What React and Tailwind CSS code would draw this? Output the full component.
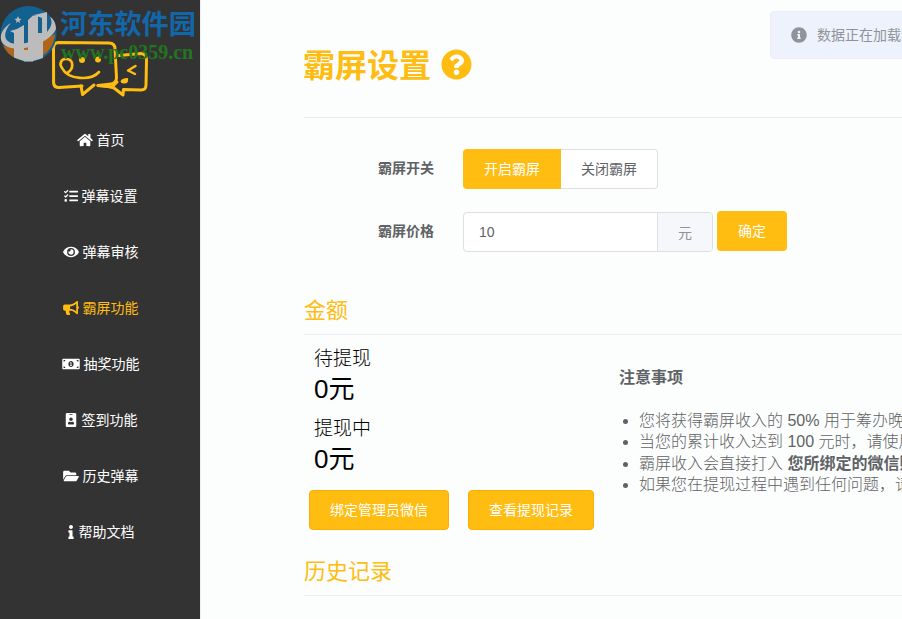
import {
  FaHome,
  FaTasks,
  FaEye,
  FaBullhorn,
  FaMoneyBillAlt,
  FaIdBadge,
  FaFolderOpen,
  FaInfo,
  FaInfoCircle,
  FaQuestionCircle,
} from 'react-icons/fa';

const menu = [
  { label: '首页', icon: FaHome, size: 'w-4' },
  { label: '弹幕设置', icon: FaTasks, size: 'w-3.5' },
  { label: '弹幕审核', icon: FaEye, size: 'w-4' },
  { label: '霸屏功能', icon: FaBullhorn, size: 'w-4', active: true },
  { label: '抽奖功能', icon: FaMoneyBillAlt, size: 'w-[18px]' },
  { label: '签到功能', icon: FaIdBadge, size: 'w-3.5' },
  { label: '历史弹幕', icon: FaFolderOpen, size: 'w-4' },
  { label: '帮助文档', icon: FaInfo, size: 'w-2' },
];

function Logo() {
  return (
    <svg className="absolute left-[50px] top-[38px]" width="100" height="62" viewBox="50 38 100 62" fill="none" stroke="#ffbc11" strokeLinecap="round" strokeLinejoin="round">
      <path strokeWidth="3" d="M82 86 L59 87.5 Q54 87.5 53.6 83 L53.5 48 Q53.5 43 58 42.5 L109 43 Q115 43 115 49 L116.5 78 Q116 83.500 111 84 L98 85.500 Q109 86 114 88 L123 95 L123.500 89.500 L141 90 Q146 90 146 85 L146.500 60 Q146.500 54 141 53.500 L119 55.500" />
      <path strokeWidth="3" d="M81 86 L82.500 94.500 L94 85" />
      <path strokeWidth="2.700" d="M67 73 C74 69 74 60 67 59 C61 58 59 64 62 68 C68 80 91 81 99 72" />
      <path strokeWidth="2.500" d="M135.500 66 L128 70.500 L135 74" />
      <path strokeWidth="3" d="M98 85.500 L112 87 L117 82" />
      <circle cx="82" cy="60" r="3" fill="#ffbc11" stroke="none" />
      <circle cx="98" cy="59.500" r="3" fill="#ffbc11" stroke="none" />
      <path d="M120.500 81.500 Q121 78 128 78 Q129 83 125 83.500 Q121 84 120.500 81.500" fill="#ffbc11" stroke="none" />
    </svg>
  );
}

function Watermark() {
  return (
    <div className="absolute left-0 top-0 w-[200px] h-[64px] z-10 pointer-events-none">
      <svg className="absolute left-0 top-[5px]" width="57" height="58" viewBox="0 5 57 58">
        <circle cx="28.500" cy="34" r="28" fill="#12618f" />
        <path d="M3 46 Q24 51 55 34 A28 28 0 0 1 8 53 Z" fill="#b0651b" />
        <path d="M10 31 L17 29 L24 25 V61 L14 57.500 V33 Z" fill="#bcbcbc" />
        <path d="M28 20 L33 15.500 H38 V35 H33 V61.500 H24 V50 H28 Z" fill="#bcbcbc" />
        <path d="M33 33 H43 V58 L33 61 Z" fill="#bcbcbc" />
        <path d="M34 15 L47 12 V38 H42 V18 Z" fill="#bcbcbc" />
        <path d="M11 23 C-1 30 -3 43 8 47 C25 53 51 41 56 29 C56 23 53 18 50 17 C58 31 32 45 16 44 C2 43 3 32 11 23 Z" fill="#bcbcbc" />
        <path d="M18 16 L19 18.500 L21.500 19 L19.500 20.500 L20 23 L18 21.500 L16 23 L16.500 20.500 L14.500 19 L17 18.500 Z" fill="#bcbcbc" />
      </svg>
      <div className="absolute left-[60px] top-[9px] text-[27.2px] leading-[32px] font-bold text-[#1267ab] whitespace-nowrap">河东软件园</div>
      <div className="absolute left-[61px] top-[41px] text-[20px] leading-[22px] font-bold text-[#24751f] whitespace-nowrap font-['Liberation_Serif',serif]">www.pc0359.cn</div>
    </div>
  );
}

function Sidebar() {
  return (
    <aside className="relative w-[200px] h-full bg-[#333333] shrink-0 pt-28">
      <Logo />
      <Watermark />
      <nav>
        {menu.map(({ label, icon: Icon, size, active }) => (
          <a
            key={label}
            className={`flex items-center justify-center gap-1 h-14 text-sm ${active ? 'text-[#ffbc11]' : 'text-white'}`}
          >
            <Icon className={`${size} h-3.5 shrink-0`} />
            <span className="-mr-px">{label}</span>
          </a>
        ))}
      </nav>
    </aside>
  );
}

function SectionTitle({ children }) {
  return (
    <h2 className="h-[47px] pt-[6px] text-[22px] leading-[34px] text-[#ffbc11] border-b border-[#ebeef5]">{children}</h2>
  );
}

function Amount({ label, value }) {
  return (
    <div className="h-[70px] pt-[11px] pl-2.5 text-black">
      <div className="text-[19px] leading-[26px] font-light">{label}</div>
      <div className="text-[26px] leading-[34px]">{value}</div>
    </div>
  );
}

export default function App() {
  return (
    <div className="relative flex w-[902px] h-[619px] overflow-hidden bg-[#fcfefd] text-[#606266] font-['Liberation_Sans','Noto_Sans_CJK_SC',sans-serif]">
      <Sidebar />

      <main className="w-[702px] shrink-0 pl-[103px] border-l border-[#f0f0f0] overflow-hidden whitespace-nowrap">
        <header className="flex items-center h-[118px] pb-[-16px] border-b border-[#ebebeb] text-[#ffbc11]">
          <h1 className="-mt-3.5 -ml-px pt-8 pb-2 text-[32px] leading-10 font-bold h-16">
            <span className="relative -top-1.5">霸屏设置</span>
          </h1>
          <FaQuestionCircle className="w-[31px] h-[31px] ml-2.5 mt-[11px]" />
        </header>

        {/* 霸屏开关 */}
        <div className="flex items-center h-10 mt-[31px] text-sm">
          <div className="w-[130px] mr-[29px] text-right font-bold -mt-0.5">霸屏开关</div>
          <button className="w-[98px] h-10 rounded-l bg-[#ffbc11] text-white">开启霸屏</button>
          <button className="w-[97px] h-10 rounded-r bg-white border border-l-0 border-[#dcdfe6]">关闭霸屏</button>
        </div>

        {/* 霸屏价格 */}
        <div className="flex items-center h-10 mt-[22px] text-sm">
          <div className="w-[130px] mr-[29px] text-right font-bold">霸屏价格</div>
          <div className="flex w-[250px] h-10 mt-0.5 rounded border border-[#dcdfe6] bg-white overflow-hidden">
            <div className="w-[193px] pl-[15px] leading-[38px]">10</div>
            <div className="flex-1 border-l border-[#dcdfe6] bg-[#f5f7fa] text-[#909399] text-center leading-10">元</div>
          </div>
          <button className="w-[70px] h-10 ml-1 rounded bg-[#ffbc11] text-white">确定</button>
        </div>

        <div className="mt-[37px]">
          <SectionTitle>金额</SectionTitle>
        </div>

        <div className="flex">
          <div className="w-[315px] shrink-0">
            <Amount label="待提现" value="0元" />
            <Amount label="提现中" value="0元" />
            <div className="flex gap-[19px] mt-[15px] pl-[5px] text-sm text-white">
              <button className="w-[140px] h-10 rounded bg-[#ffbc11] border border-[#ffae00]">绑定管理员微信</button>
              <button className="w-[126px] h-10 rounded bg-[#ffbc11] border border-[#ffae00]">查看提现记录</button>
            </div>
          </div>
          <div className="pt-[31px] text-base">
            <h3 className="leading-6 font-bold">注意事项</h3>
            <ul className="mt-5 pl-5 list-disc leading-[21.4px] font-light">
              <li>您将获得霸屏收入的 50% 用于筹办晚会</li>
              <li>当您的累计收入达到 100 元时，请使用</li>
              <li>霸屏收入会直接打入 <b className="font-bold">您所绑定的微信账户</b></li>
              <li>如果您在提现过程中遇到任何问题，请联系</li>
            </ul>
          </div>
        </div>

        <div className="mt-[19px]">
          <SectionTitle>历史记录</SectionTitle>
        </div>
      </main>

      {/* 加载提示 */}
      <div className="absolute left-[770px] top-[11px] flex items-center gap-2.5 w-[380px] h-12 pl-5 rounded bg-[#edf2fc] border border-[#ebeef5] text-sm text-[#909399] whitespace-nowrap">
        <FaInfoCircle className="w-4 h-4" />
        <span>数据正在加载中</span>
      </div>
    </div>
  );
}
